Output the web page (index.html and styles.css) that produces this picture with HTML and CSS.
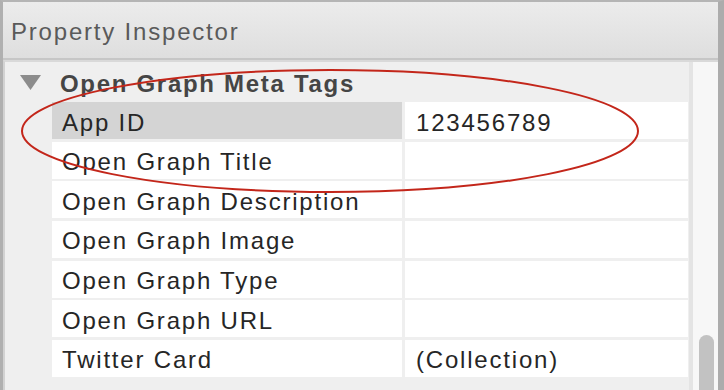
FILE: index.html
```html
<!DOCTYPE html>
<html lang="en">
<head>
    <meta charset="UTF-8">
    <title>Property Inspector</title>
    <link rel="stylesheet" href="styles.css">
</head>
<body>
    <div class="panel">
        <!-- panel title -->
        <div class="panel-header">Property Inspector</div>

        <div class="panel-body">
            <div class="grid-area">
                <!-- group -->
                <div class="group-header">
                    <svg class="disclosure" width="21" height="15" viewBox="0 0 21 15">
                        <polygon points="0,0 21,0 10.5,15" fill="#8c8c8c"/>
                    </svg>
                    <span class="group-title">Open Graph Meta Tags</span>
                </div>

                <!-- properties -->
                <div class="prop-grid">
                    <div class="prop-name selected">App ID</div>
                    <div class="prop-value">123456789</div>
                    <div class="prop-name">Open Graph Title</div>
                    <div class="prop-value"></div>
                    <div class="prop-name">Open Graph Description</div>
                    <div class="prop-value"></div>
                    <div class="prop-name">Open Graph Image</div>
                    <div class="prop-value"></div>
                    <div class="prop-name">Open Graph Type</div>
                    <div class="prop-value"></div>
                    <div class="prop-name">Open Graph URL</div>
                    <div class="prop-value"></div>
                    <div class="prop-name">Twitter Card</div>
                    <div class="prop-value">(Collection)</div>
                </div>
            </div>

            <!-- vertical scrollbar -->
            <div class="scrollbar">
                <div class="scroll-thumb"></div>
            </div>
        </div>
    </div>

    <!-- red annotation drawn over the screenshot -->
    <svg class="annotation" width="724" height="390" viewBox="0 0 724 390">
        <ellipse cx="330" cy="131" rx="308" ry="61" fill="none" stroke="#c3261a" stroke-width="2"/>
    </svg>
</body>
</html>
```

FILE: styles.css
```css
:root {
    --panel-bg: #efefef;
    --line-color: #e4e4e4;
    --text-color: #262626;
    --border-color: #b0b0b0;
}
body {
    margin: 0;
    width: 724px;
    height: 390px;
    overflow: hidden;
    position: relative;
    font-family: "Liberation Sans", Arial, sans-serif;
    font-size: 24px;
    letter-spacing: 1.8px;
    color: var(--text-color);
    background: var(--panel-bg);
}
.panel {
    height: 390px;
    box-sizing: border-box;
    border-top: 2px solid #b5b5b5;
    border-left: 3px solid var(--border-color);
    border-right: 6px solid #acacac;
    display: flex;
    flex-direction: column;
    overflow: hidden;
}
/* title bar */
.panel-header {
    height: 58px;
    flex-shrink: 0;
    display: flex;
    align-items: center;
    padding-left: 8px;
    padding-top: 3px;
    box-sizing: border-box;
    color: #5a5a5a;
    background: linear-gradient(#ececec, #dedede);
    border-bottom: 2px solid #c6c6c6;
}
.panel-body {
    flex: 1;
    display: flex;
    min-height: 0;
    border-top: 2px solid #d9d9d9;
    border-left: 2px solid #d2d2d2;
}
.grid-area {
    flex: 1;
    background: var(--panel-bg);
}
/* group row */
.group-header {
    height: 40px;
    box-sizing: border-box;
    padding-top: 4px;
    display: flex;
    align-items: center;
}
.disclosure {
    margin-left: 15px;
    margin-right: 19px;
    margin-top: -3px;
}
.group-title {
    font-weight: bold;
    color: #454545;
    letter-spacing: 1.7px;
}
/* property rows */
.prop-grid {
    display: grid;
    grid-template-columns: 350px 283px;
    grid-auto-rows: 37px;
    gap: 2.67px 3px;
    margin-left: 47px;
    width: 636px;
}
.prop-name,
.prop-value {
    background: #ffffff;
    display: flex;
    align-items: center;
    padding-top: 4px;
    box-sizing: border-box;
    white-space: nowrap;
    overflow: hidden;
}
.prop-name {
    padding-left: 10px;
}
.prop-value {
    padding-left: 11px;
}
.prop-name.selected {
    background: #d4d4d4;
}
/* scrollbar */
.scrollbar {
    width: 25px;
    flex-shrink: 0;
    position: relative;
    overflow: hidden;
    background: #f7f7f7;
    border-left: 4px solid #e4e4e4;
}
.scroll-thumb {
    position: absolute;
    left: 6px;
    top: 273px;
    width: 15px;
    height: 80px;
    border-radius: 8px;
    background: #c2c2c2;
}
.annotation {
    position: absolute;
    left: 0;
    top: 0;
    pointer-events: none;
}
```
